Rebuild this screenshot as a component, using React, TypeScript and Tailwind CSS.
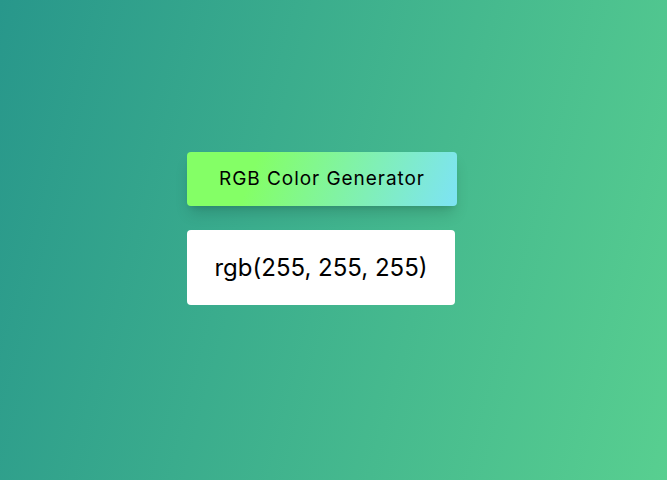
export default function App() {
  return (
    <div
      className="w-full h-[480px] bg-[linear-gradient(105deg,#28978b,#58cf90)] pl-[187px] pt-[152px]"
      style={{ fontFamily: 'Inter, "Noto Sans", sans-serif' }}
    >
      <div className="flex flex-col items-start gap-6">
        <button className="w-[270px] h-[54px] rounded bg-[linear-gradient(110deg,#84ff66_25%,#7de3f5)] text-[19px] tracking-[0.05em] text-black shadow-lg shadow-black/15">
          RGB Color Generator
        </button>
        <div className="w-[268px] h-[75px] rounded bg-white flex items-center justify-center text-[24px] text-black">
          rgb(255, 255, 255)
        </div>
      </div>
    </div>
  );
}
